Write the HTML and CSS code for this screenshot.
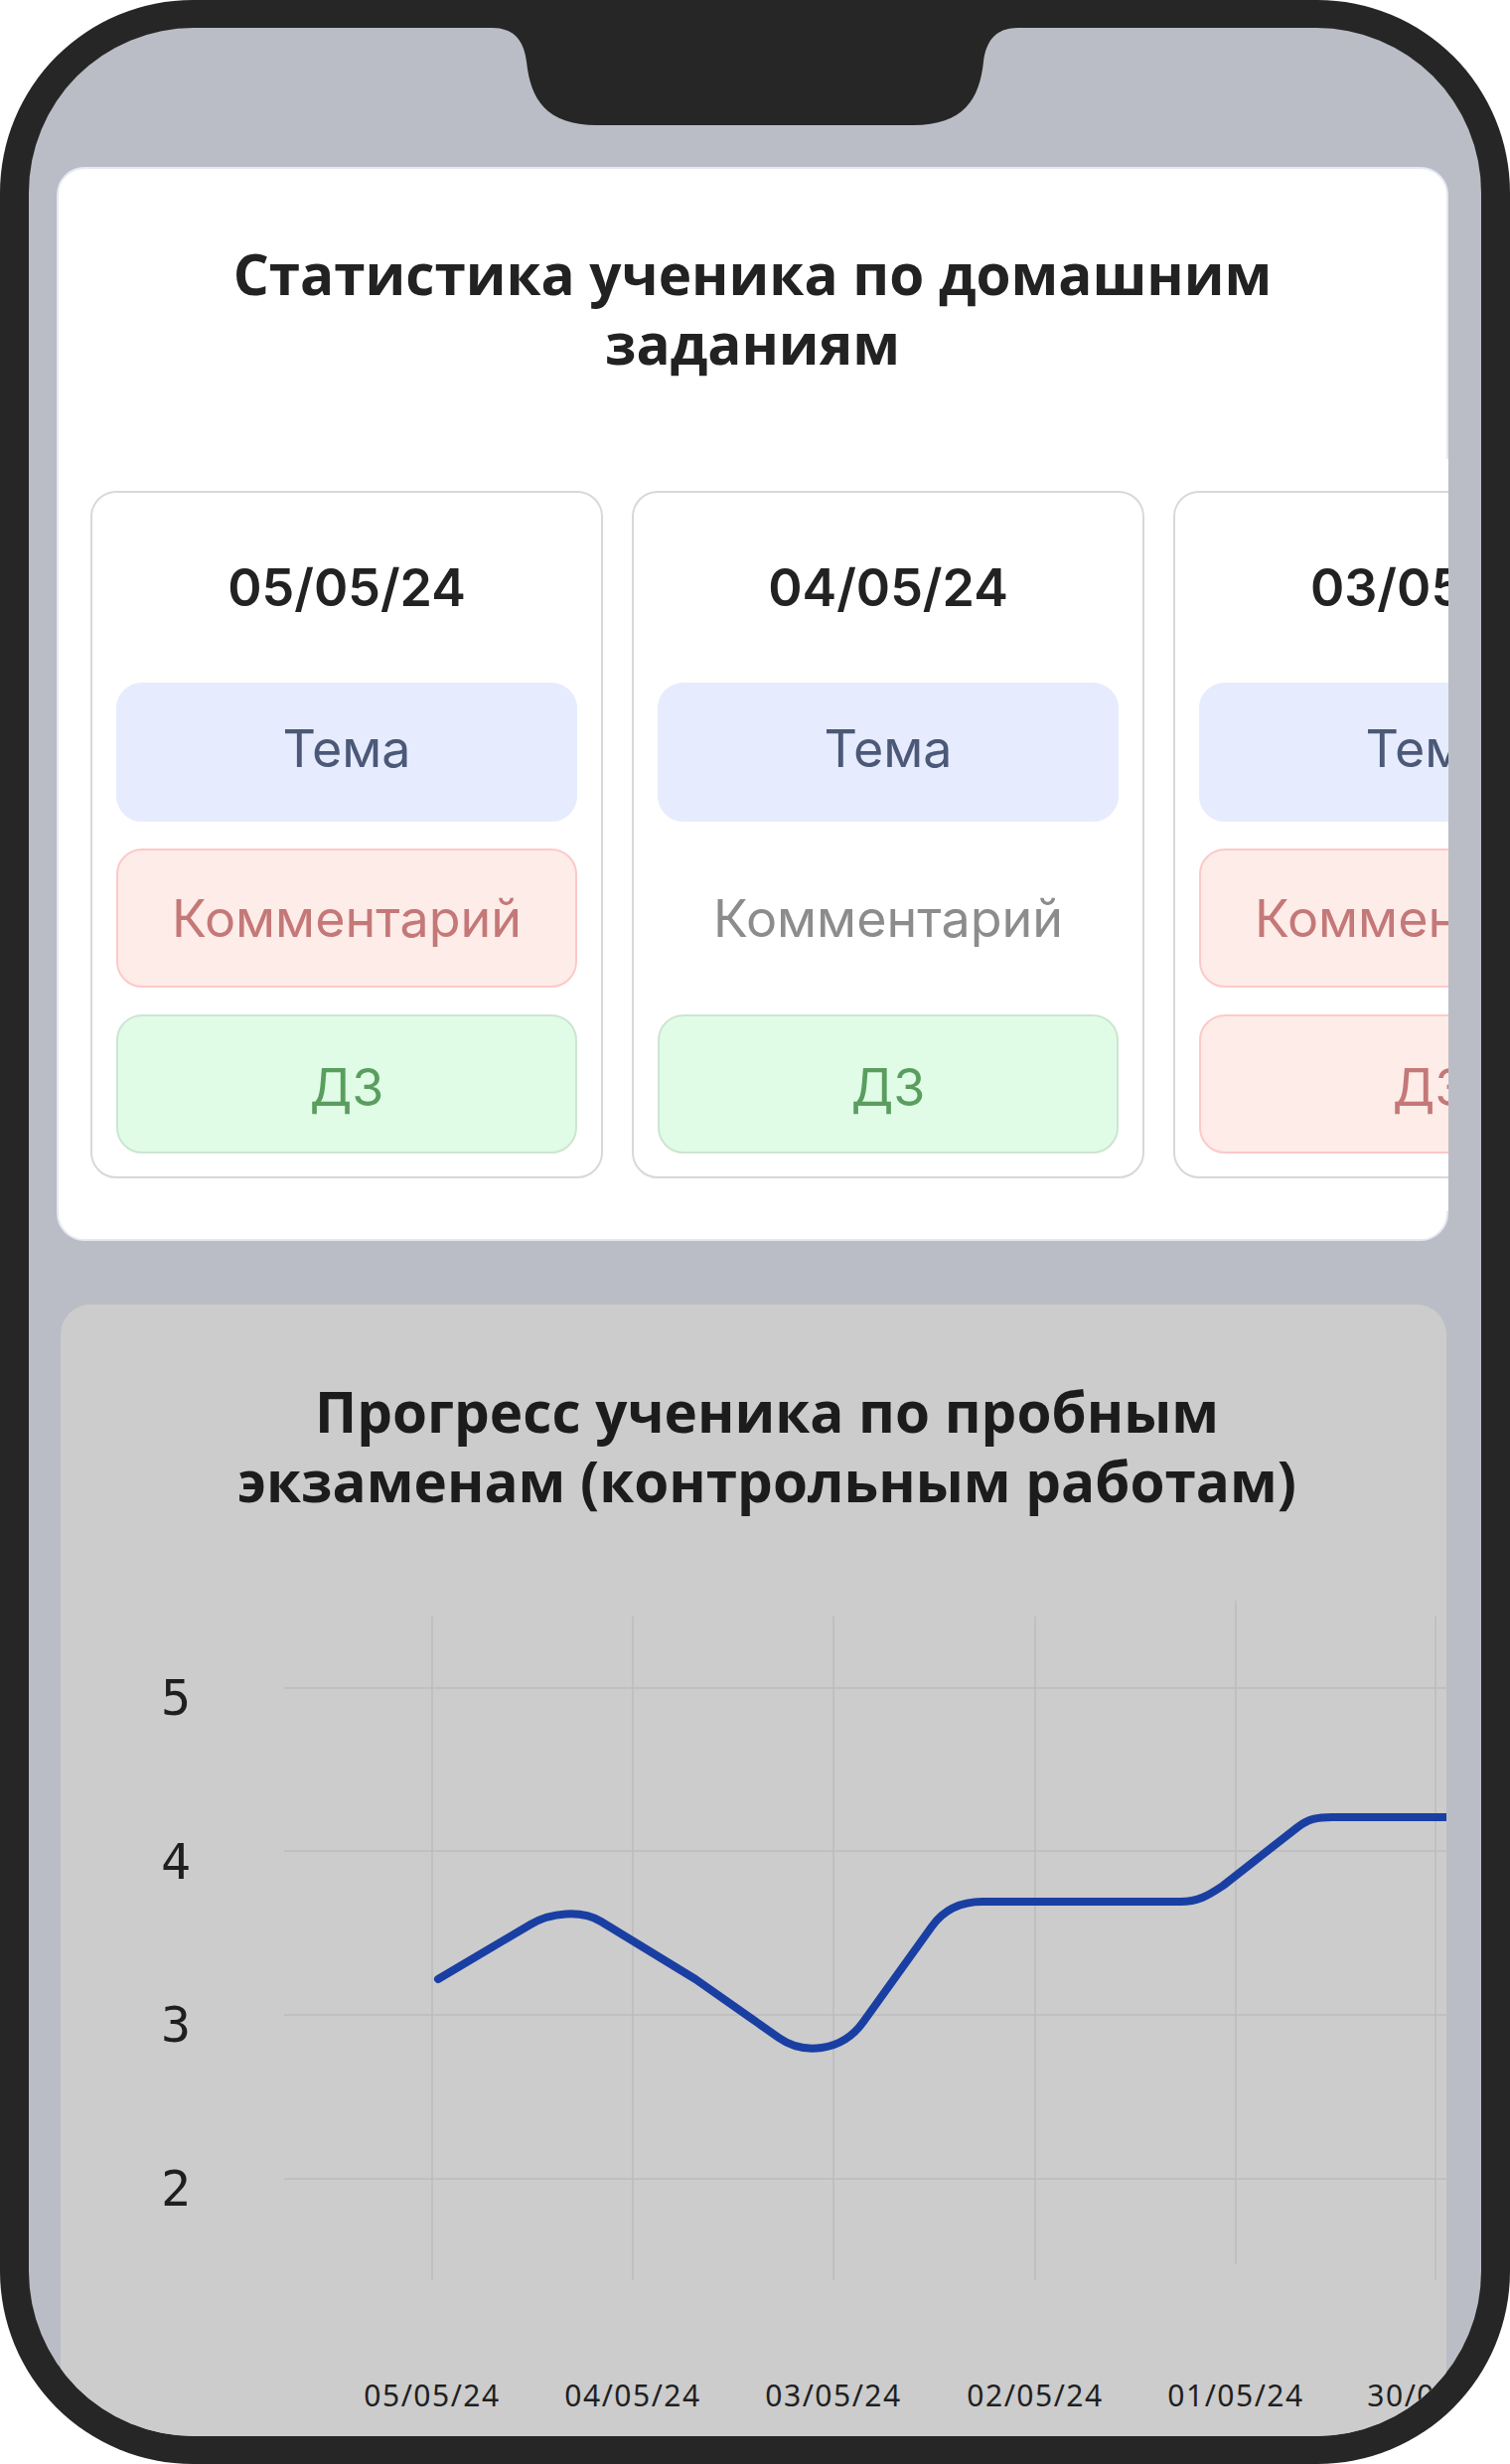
FILE: index.html
```html
<!DOCTYPE html>
<html lang="ru">
<head>
<meta charset="utf-8">
<title>Статистика ученика</title>
<link rel="stylesheet" href="styles.css">
</head>
<body>
<div class="phone">
  <div class="screen">
    <section class="panel panel-hw">
      <h2 class="panel-title">Статистика ученика по домашним заданиям</h2>
      <div class="scroller">
        <div class="day">
          <div class="day-date">05/05/24</div>
          <div class="pill pill-topic">Тема</div>
          <div class="pill pill-bad">Комментарий</div>
          <div class="pill pill-good pill-hw">ДЗ</div>
        </div>
        <div class="day">
          <div class="day-date">04/05/24</div>
          <div class="pill pill-topic">Тема</div>
          <div class="pill pill-none">Комментарий</div>
          <div class="pill pill-good pill-hw">ДЗ</div>
        </div>
        <div class="day">
          <div class="day-date">03/05/24</div>
          <div class="pill pill-topic">Тема</div>
          <div class="pill pill-bad">Комментарий</div>
          <div class="pill pill-bad pill-hw">ДЗ</div>
        </div>
      </div>
    </section>

    <section class="panel panel-chart">
      <h2 class="panel-title">Прогресс ученика по пробным экзаменам (контрольным работам)</h2>
      <svg class="chart" viewBox="0 0 1395 880" width="1395" height="880">
        <g class="grid">
          <line x1="225" y1="98" x2="1395" y2="98"/>
          <line x1="225" y1="262" x2="1395" y2="262"/>
          <line x1="225" y1="427" x2="1395" y2="427"/>
          <line x1="225" y1="592" x2="1395" y2="592"/>
          <line x1="374" y1="26" x2="374" y2="694"/>
          <line x1="576" y1="26" x2="576" y2="694"/>
          <line x1="778" y1="26" x2="778" y2="694"/>
          <line x1="981" y1="26" x2="981" y2="694"/>
          <line x1="1183" y1="10" x2="1183" y2="678"/>
          <line x1="1384" y1="26" x2="1384" y2="694"/>
        </g>
        <g class="y-labels">
          <text x="116" y="125">5</text>
          <text x="116" y="290">4</text>
          <text x="116" y="454">3</text>
          <text x="116" y="619">2</text>
        </g>
        <g class="x-labels">
          <text x="374" y="821">05/05/24</text>
          <text x="576" y="821">04/05/24</text>
          <text x="778" y="821">03/05/24</text>
          <text x="981" y="821">02/05/24</text>
          <text x="1183" y="821">01/05/24</text>
          <text x="1384" y="821">30/04/24</text>
        </g>
        <path class="series" d="M380,391 L473,336 C493,324 524,321 544,333 L639,391 L723,450 C747,467 786,465 808,434 L877,338 C889,321 905,313 928,313 L1127,313 C1145,313 1155,307 1170,297 L1244,239 C1256,229.5 1265,228 1280,228 L1410,228"/>
      </svg>
    </section>
  </div>
  <svg class="notch" viewBox="0 0 1520 130" width="1520" height="130">
    <path d="M495,0 L495,28 C515,28 527,38 530,62 C534,100 550,126 601,126 L919,126 C970,126 986,100 990,62 C993,38 1005,28 1025,28 L1025,0 Z"/>
  </svg>
</div>
</body>
</html>
```

FILE: styles.css
```css
* {
  box-sizing: border-box;
}

html,
body {
  margin: 0;
  padding: 0;
  background: #ffffff;
}

body {
  width: 1520px;
  height: 2480px;
  overflow: hidden;
  font-family: Inter, "Noto Sans", sans-serif;
}

.phone {
  position: relative;
  width: 1520px;
  height: 2480px;
  background: #262626;
  border-radius: 194px;
  padding: 28px 29px;
}

.screen {
  height: 100%;
  background: #babdc5;
  border-radius: 166px;
  overflow: hidden;
  padding-top: 140px;
}

.notch {
  position: absolute;
  top: 0;
  left: 0;
  display: block;
}

.notch path {
  fill: #262626;
}

.panel-title {
  margin: 0 auto;
  max-width: 1120px;
  text-align: center;
  font-family: "Open Sans", "Noto Sans", sans-serif;
  font-weight: 700;
  font-size: 56.6px;
  line-height: 70px;
  color: #222222;
}

/* ---------- homework panel ---------- */
.panel-hw {
  margin: 0 33px 0 28px;
  background: #ffffff;
  border: 2px solid #e5e8f2;
  border-radius: 28px;
  padding: 71px 0 28px;
}

.scroller {
  display: flex;
  gap: 29px;
  margin-top: 81px;
  margin-right: -2px;
  padding: 32px 0 33px 32px;
  background: #ffffff;
  overflow: hidden;
}

.day {
  flex: 0 0 516px;
  display: flex;
  flex-direction: column;
  border: 2px solid #d8d8d8;
  border-radius: 26px;
  padding: 0 24px 23px;
}

.day-date {
  text-align: center;
  font-weight: 600;
  font-size: 52px;
  line-height: 64px;
  padding: 64px 0 63px;
  color: #222222;
}

.pill {
  height: 140px;
  display: flex;
  align-items: center;
  justify-content: center;
  border: 2px solid transparent;
  border-radius: 26px;
  font-size: 52px;
  font-weight: 400;
  white-space: nowrap;
}

.pill + .pill {
  margin-top: 27px;
}

.pill-topic {
  background: #e6ecfd;
  border-color: #e6ecfd;
  color: #4b5877;
  padding-bottom: 8px;
}

.pill-hw {
  padding-top: 7px;
}

.pill-bad {
  background: #fdece8;
  border-color: #fcc9c9;
  color: #c47878;
}

.pill-good {
  background: #e0fce6;
  border-color: #cde5d2;
  color: #5a9e5f;
}

.pill-none {
  background: transparent;
  color: #8c8c8c;
}

/* ---------- chart panel ---------- */
.panel-chart {
  margin: 64px 35px 0 32px;
  background: #cccccc;
  border-radius: 30px;
  padding-top: 73px;
  min-height: 1300px;
  overflow: hidden;
}

.panel-chart .panel-title {
  color: #1c1c1c;
  padding-left: 27px;
  max-width: 1150px;
}

.chart {
  display: block;
  margin-top: 75px;
}

.grid line {
  stroke: #bdbdbd;
  stroke-width: 1.5;
}

.y-labels text {
  font-family: "DejaVu Sans Mono", monospace;
  font-size: 50px;
  fill: #1f1f1f;
  text-anchor: middle;
}

.x-labels text {
  font-family: "Noto Sans", sans-serif;
  font-variant-numeric: tabular-nums;
  font-size: 30px;
  letter-spacing: 1.5px;
  fill: #1f1f1f;
  text-anchor: middle;
}

.series {
  fill: none;
  stroke: #1a3fa3;
  stroke-width: 8;
  stroke-linecap: round;
  stroke-linejoin: round;
}
```
